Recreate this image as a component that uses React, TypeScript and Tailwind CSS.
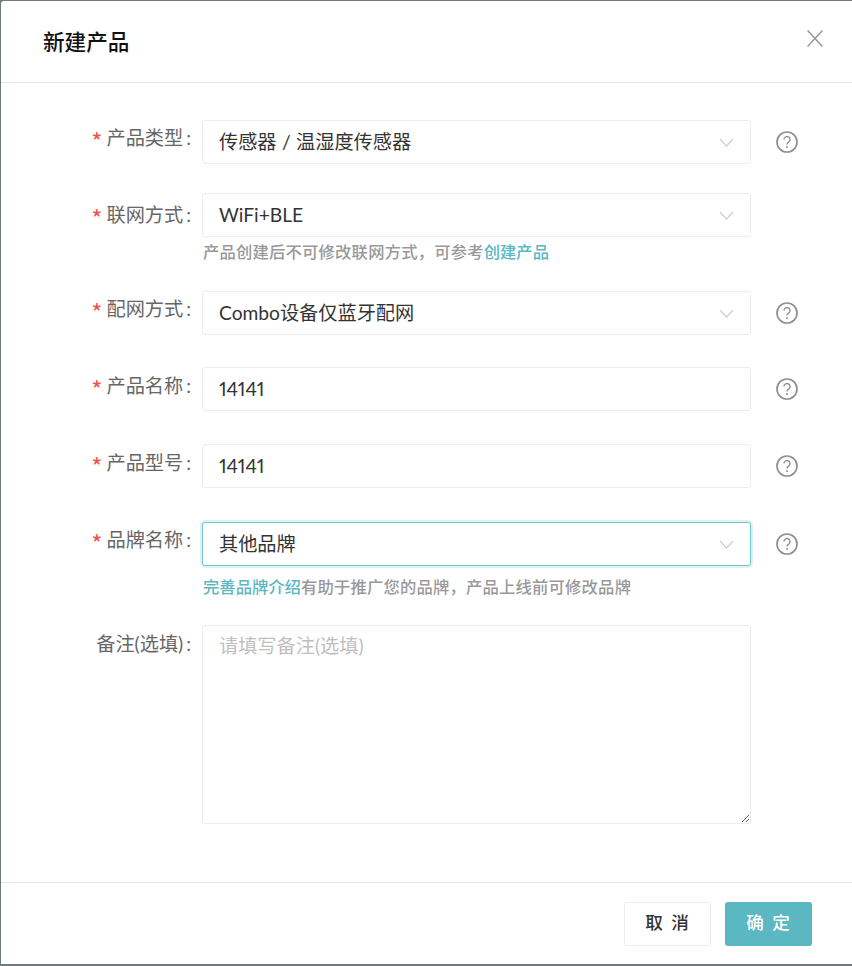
import React from "react";

const font = { fontFamily: '"Lato","Noto Sans CJK SC",sans-serif' };

function Chevron() {
  return (
    <svg width="15" height="9" viewBox="0 0 15 9" fill="none" stroke="#cfcfcf" strokeWidth="1.2" className="shrink-0">
      <path d="M1 1l6.5 7L14 1" />
    </svg>
  );
}

function Help() {
  return (
    <svg width="22" height="22" viewBox="0 0 22 22" fill="none" className="shrink-0">
      <circle cx="11" cy="11" r="10" stroke="#8f8f8f" strokeWidth="1.7" />
      <path d="M8 8.6a3 3 0 1 1 4.6 2.5c-1 .6-1.6 1.1-1.6 2.3" stroke="#8f8f8f" strokeWidth="1.4" />
      <circle cx="11" cy="16" r="1" fill="#8f8f8f" />
    </svg>
  );
}

function Label({ text, required = true, className = "" }: { text: string; required?: boolean; className?: string }) {
  return (
    <div className={"w-[201px] shrink-0 h-[38px] flex items-center justify-end pr-[11px] text-[19.2px] text-[#666] " + className}>
      {required && <span className="text-[#f0524b] mr-[4px] text-[24px] leading-none mt-[6px] font-['Noto_Sans_CJK_SC']">*</span>}
      <span>{text}</span>
      <span className="ml-[3px]">:</span>
    </div>
  );
}

function Field({ value, select, focus, help = true }: { value: string; select?: boolean; focus?: boolean; help?: boolean }) {
  return (
    <div className="flex items-center">
      <div
        className={
          focus
            ? "w-[549px] h-[44px] mt-px rounded-[3px] border border-[#6cc8cf] shadow-[0_0_0_2px_#def1f3] bg-white flex items-center justify-between px-[16px] text-[19.2px] text-[#333] [word-spacing:0.5px] [font-variant-numeric:proportional-nums]"
            : "w-[549px] h-[44px] rounded-[3px] border border-[#ececec] bg-white flex items-center justify-between px-[16px] text-[19.2px] text-[#333] [word-spacing:0.5px] [font-variant-numeric:proportional-nums]"
        }
      >
        <span className="pt-px">{value}</span>
        {select && <Chevron />}
      </div>
      {help && (
        <div className="ml-[25px]">
          <Help />
        </div>
      )}
    </div>
  );
}

function Row({
  label,
  value,
  select,
  focus,
  help,
  hint,
  className,
  labelClass,
}: {
  label: string;
  value: string;
  select?: boolean;
  focus?: boolean;
  help?: boolean;
  hint?: React.ReactNode;
  className: string;
  labelClass?: string;
}) {
  return (
    <div className={"flex items-start " + className}>
      <Label text={label} className={labelClass} />
      <div>
        <Field value={value} select={select} focus={focus} help={help} />
        {hint}
      </div>
    </div>
  );
}

export default function App() {
  return (
    <div style={font} className="w-[852px] h-[966px] bg-[#6f7a7a] pt-px pl-px pb-[2px] overflow-hidden">
      <div className="w-[851px] h-[963px] bg-white flex flex-col rounded-tl-[3px]">
        <div className="h-[82px] shrink-0 border-b border-[#e8e8e8] flex items-center justify-between pl-[42px] pr-[29px]">
          <h1 className="text-[21.6px] font-medium text-[#111] pt-[1px]">新建产品</h1>
          <svg width="16" height="17" viewBox="0 0 16 17" stroke="#999" strokeWidth="1.5" fill="none" className="mb-[6px]">
            <path d="M0.6 0.6L15.4 16.4M15.4 0.6L0.6 16.4" />
          </svg>
        </div>
        <div className="flex-1 pt-[37px]">
          <Row labelClass="-mt-px" className="" label="产品类型" value="传感器 / 温湿度传感器" select />
          <Row
            labelClass="mt-[3px]"
            className="mt-[29px]"
            label="联网方式"
            value="WiFi+BLE"
            select
            help={false}
            hint={
              <div className="text-[16.32px] leading-[24px] text-[#999] mt-[3px] ml-px font-medium tracking-[0.2px]">
                产品创建后不可修改联网方式，可参考<span className="text-[#5bb7c1] tracking-normal">创建产品</span>
              </div>
            }
          />
          <Row labelClass="-mt-px" className="mt-[27px]" label="配网方式" value="Combo设备仅蓝牙配网" select />
          <Row className="mt-[32px]" label="产品名称" value="14141" />
          <Row className="mt-[33px]" label="产品型号" value="14141" />
          <Row
            className="mt-[33px]"
            label="品牌名称"
            value="其他品牌"
            select
            focus
            hint={
              <div className="text-[16.32px] leading-[24px] text-[#999] mt-[9px] ml-px font-medium tracking-[0.2px]">
                <span className="text-[#5bb7c1] tracking-normal">完善品牌介绍</span>有助于推广您的品牌，产品上线前可修改品牌
              </div>
            }
          />
          <div className="flex items-start mt-[26px]">
            <Label text="备注(选填)" required={false} />
            <textarea
              readOnly
              placeholder="请填写备注(选填)"
              className="w-[549px] h-[199px] rounded-[3px] border border-[#ececec] px-[16px] py-[6px] text-[19.2px] leading-[28px] text-[#333] placeholder:text-[#bfbfbf] outline-none"
            />
          </div>
        </div>
        <div className="h-[82px] shrink-0 border-t border-[#e8e8e8] flex items-center justify-end gap-[14px] pr-[40px]">
          <button className="w-[87px] h-[44px] rounded-[3px] border border-[#ececec] bg-white pl-px text-[17.6px] text-[#333] tracking-[2px] font-medium">
            取 消
          </button>
          <button className="w-[87px] h-[44px] rounded-[3px] bg-[#5bb7c1] pl-px text-[17.6px] text-white tracking-[2px] font-medium">
            确 定
          </button>
        </div>
      </div>
    </div>
  );
}
